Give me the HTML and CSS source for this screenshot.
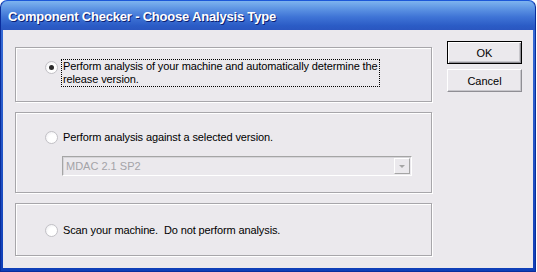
FILE: index.html
```html
<!DOCTYPE html>
<html>
<head>
<meta charset="utf-8">
<link rel="stylesheet" href="styles.css">
</head>
<body>
<div class="window">
  <div class="titlebar"><span class="title">Component Checker - Choose Analysis Type</span></div>
  <div class="client">
    <div class="groups">
      <div class="group g1">
        <div class="opt">
          <span class="radio checked"></span>
          <span class="label focus">Perform analysis of your machine and automatically determine the<br>release version.</span>
        </div>
      </div>
      <div class="group g2">
        <div class="opt">
          <span class="radio"></span>
          <span class="label">Perform analysis against a selected version.</span>
        </div>
        <div class="combo">
          <span class="combo-text">MDAC 2.1 SP2</span>
          <span class="combo-btn"><span class="arrow"></span></span>
        </div>
      </div>
      <div class="group g3">
        <div class="opt">
          <span class="radio"></span>
          <span class="label">Scan your machine.&nbsp; Do not perform analysis.</span>
        </div>
      </div>
    </div>
    <div class="buttons">
      <div class="btn default"><span>OK</span></div>
      <div class="btn"><span>Cancel</span></div>
    </div>
  </div>
</div>
</body>
</html>
```
FILE: styles.css
```css
html, body {
  margin: 0;
  padding: 0;
  background: #ffffff;
}
body {
  font-family: "Liberation Sans", Arial, sans-serif;
  font-size: 11px;
  color: #000;
}
.window {
  width: 536px;
  height: 272px;
  box-sizing: border-box;
  background: linear-gradient(#3a6fd8, #0f3fb8);
  border-radius: 7px 7px 0 0;
  border: 1px solid #0a2d9c;
  border-top-color: #1c58d8;
  display: flex;
  flex-direction: column;
}
.titlebar {
  height: 29px;
  flex: none;
  border-radius: 7px 7px 0 0;
  background: linear-gradient(#7eb4ef 0%, #5f96e4 25%, #3f74d6 55%, #2b5cc6 85%, #2a56c0 100%);
  display: flex;
  align-items: center;
  padding-left: 7px;
  padding-top: 1px;
  box-sizing: border-box;
}
.title {
  font-family: "Liberation Sans", Arial, sans-serif;
  font-weight: bold;
  font-size: 13px;
  letter-spacing: -0.2px;
  color: #fff;
  text-shadow: 1px 1px 0 #0a1e72;
}
.client {
  flex: 1;
  margin: 0 2px 3px 2px;
  background: #ebe9ed;
  display: flex;
  align-items: flex-start;
  padding: 11px 0 0 12px;
}
.groups {
  margin-top: 6px;
  width: 417px;
  display: flex;
  flex-direction: column;
  gap: 10px;
}
.group {
  box-sizing: border-box;
  border: 1px solid #a7a6aa;
  box-shadow: 1px 1px 0 #ffffff, inset 1px 1px 0 #ffffff;
  padding-left: 29px;
}
.g1 { height: 55px; padding-top: 11px; }
.g2 { height: 81px; padding-top: 17px; }
.g3 { height: 53px; padding-top: 19px; }
.opt {
  display: flex;
  align-items: flex-start;
}
.radio {
  width: 13px;
  height: 13px;
  box-sizing: border-box;
  border-radius: 50%;
  border: 1px solid #c2c1c6;
  background: radial-gradient(circle at 65% 65%, #ffffff 45%, #e8e7ec 100%);
  flex: none;
  margin-top: 1px;
  position: relative;
}
.g1 .radio { margin-top: 2px; }
.radio.checked::after {
  content: "";
  position: absolute;
  left: 3px;
  top: 3px;
  width: 5px;
  height: 5px;
  border-radius: 50%;
  background: #2b2b2b;
}
.label {
  margin-left: 3px;
  line-height: 13px;
  padding: 0 1px;
  border: 1px dotted transparent;
  letter-spacing: -0.12px;
}
.label.focus {
  border-color: #000;
}
.combo {
  margin: 11px 0 0 17px;
  width: 350px;
  height: 20px;
  box-sizing: border-box;
  border: 1px solid #a5a5a5;
  border-right-color: #ffffff;
  border-bottom-color: #ffffff;
  box-shadow: inset 1px 1px 0 #d6d5d9;
  display: flex;
  align-items: center;
  justify-content: space-between;
}
.combo-text {
  color: #a4a3a8;
  padding-left: 3px;
}
.combo-btn {
  width: 16px;
  height: 16px;
  box-sizing: border-box;
  margin-right: 1px;
  border: 1px solid #ffffff;
  border-right-color: #a5a5a5;
  border-bottom-color: #a5a5a5;
  display: flex;
  align-items: center;
  justify-content: center;
}
.arrow {
  width: 0;
  height: 0;
  border-left: 3px solid transparent;
  border-right: 3px solid transparent;
  border-top: 3px solid #a5a5a5;
}
.buttons {
  margin-left: 15px;
  display: flex;
  flex-direction: column;
  gap: 5px;
}
.btn {
  width: 75px;
  height: 23px;
  box-sizing: border-box;
  border: 1px solid #ffffff;
  border-right-color: #8f8e94;
  border-bottom-color: #8f8e94;
  box-shadow: inset -1px -1px 0 #c8c7cc;
  display: flex;
  align-items: center;
  justify-content: center;
  color: #000;
}
.btn.default {
  border: 1px solid #000;
  box-shadow: inset 1px 1px 0 #ffffff, inset -1px -1px 0 #8f8e94, inset -2px -2px 0 #c8c7cc;
}
```
